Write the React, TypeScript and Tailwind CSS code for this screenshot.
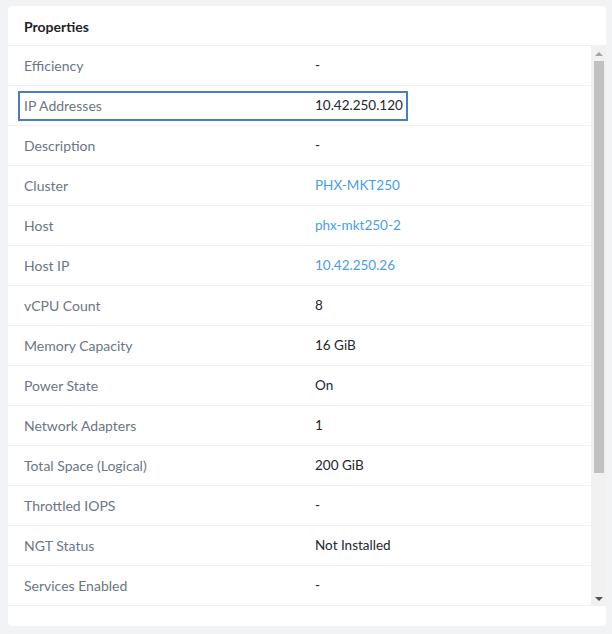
import React from 'react';

type Row = {
    label: string;
    value: string;
    link?: boolean;
    selected?: boolean;
};

const rows: Row[] = [
    { label: 'Efficiency', value: '-' },
    { label: 'IP Addresses', value: '10.42.250.120', selected: true },
    { label: 'Description', value: '-' },
    { label: 'Cluster', value: 'PHX-MKT250', link: true },
    { label: 'Host', value: 'phx-mkt250-2', link: true },
    { label: 'Host IP', value: '10.42.250.26', link: true },
    { label: 'vCPU Count', value: '8' },
    { label: 'Memory Capacity', value: '16 GiB' },
    { label: 'Power State', value: 'On' },
    { label: 'Network Adapters', value: '1' },
    { label: 'Total Space (Logical)', value: '200 GiB' },
    { label: 'Throttled IOPS', value: '-' },
    { label: 'NGT Status', value: 'Not Installed' },
    { label: 'Services Enabled', value: '-' },
];

function PropertyRow({ row }: { row: Row }) {
    return (
        <div className="h-[40px] border-b border-[#eef0f3] flex items-center px-[10px]">
            <div
                className={
                    row.selected
                        ? 'flex items-center h-[30px] w-[390px] border-2 border-[#4a7dc1] pl-[4px]'
                        : 'flex items-center h-[30px] w-[390px] border-2 border-transparent pl-[4px]'
                }
            >
                <span className="w-[291px] text-[14px] text-[#6b7684]">{row.label}</span>
                <span className={row.link ? 'text-[#4a9de6]' : 'text-[#22272c]'}>{row.value}</span>
            </div>
        </div>
    );
}

function Scrollbar() {
    return (
        <div className="w-[15px] bg-[#f1f1f1] flex flex-col items-center">
            <div className="h-[15px] flex items-center justify-center">
                <div className="w-0 h-0 border-l-[4px] border-r-[4px] border-b-[4px] border-l-transparent border-r-transparent border-b-[#a3a3a3]" />
            </div>
            <div className="w-[10px] h-[412px] bg-[#c1c1c1]" />
            <div className="flex-1" />
            <div className="h-[15px] flex items-center justify-center">
                <div className="w-0 h-0 border-l-[4px] border-r-[4px] border-t-[4px] border-l-transparent border-r-transparent border-t-[#505050]" />
            </div>
        </div>
    );
}

export default function App() {
    return (
        <div
            className="w-[612px] h-[634px] bg-[#f2f3f5] pt-[6px] pl-[8px] pr-[6px] text-[13.5px]"
            style={{ fontFamily: 'Lato, "Open Sans", sans-serif' }}
        >
            <div className="bg-white rounded-[4px] h-[620px] flex flex-col">
                {/* Header */}
                <div className="h-[40px] border-b border-[#eef0f3] flex items-center pt-[2px] px-[16px] shrink-0">
                    <span className="font-bold text-[14px] text-[#1f2328]">Properties</span>
                </div>

                {/* List */}
                <div className="h-[560px] flex">
                    <div className="flex-1 overflow-hidden">
                        {rows.map((row) => (
                            <PropertyRow key={row.label} row={row} />
                        ))}
                    </div>
                    <Scrollbar />
                </div>
            </div>
        </div>
    );
}
